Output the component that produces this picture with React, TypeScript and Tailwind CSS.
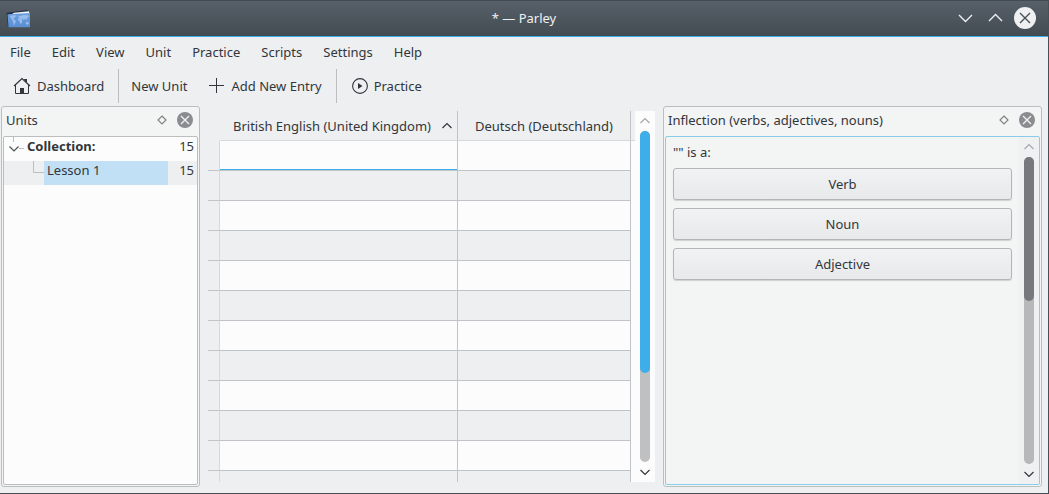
import type { ReactNode } from "react";

const menus = ["File", "Edit", "View", "Unit", "Practice", "Scripts", "Settings", "Help"];
const wordTypes = ["Verb", "Noun", "Adjective"];
const rows = Array.from({ length: 12 }, (_, i) => i);

function Chevron({ up = false, className = "" }: { up?: boolean; className?: string }) {
  return (
    <svg width="12" height="8" viewBox="0 0 12 8" fill="none" stroke="currentColor" strokeWidth="1.2" className={className} aria-hidden="true">
      <path d={up ? "M1.5 6 L6 1.5 L10.5 6" : "M1.5 2 L6 6.5 L10.5 2"} />
    </svg>
  );
}

function AppIcon() {
  return (
    <svg width="26" height="20" viewBox="0 0 26 20" aria-hidden="true">
      <defs>
        <linearGradient id="sea" x1="0" y1="0" x2="0" y2="1">
          <stop offset="0" stopColor="#6c9fdd" />
          <stop offset="1" stopColor="#5a8fd4" />
        </linearGradient>
      </defs>
      <path d="M0.5 4.8 L22 2 L22.5 6 L3 19 L2 19 Z" fill="#1f3148" />
      <path d="M8 4.8 L23 3.3 L23.5 8 L3 8 Z" fill="#f2f4f6" />
      <path d="M1.5 6.3 L24 5 L24 19.3 L2.5 19.3 Z" fill="url(#sea)" />
      <path
        d="M3.5 7.8 L8 7 L10.5 7.7 L8.8 9.5 L7.2 10.7 L8.8 12 L10 13.3 L8.6 16 L7.8 17.8 L7.2 14 L5.6 11.1 Z M12 8.7 L13.5 7.5 L15 7.9 L17 7 L22.5 7.2 L22.8 8.7 L21.3 9.9 L20 12 L18.8 10.7 L17.5 12.2 L16.5 10.5 L15.5 11.5 L16.4 12.7 L15.1 16.2 L14 15.2 L13.5 13 L11.9 12.2 L12.2 10.5 L13.8 9.9 Z M20 14.2 L22 13.7 L23 15.7 L21.5 16.7 L19.8 15.9 Z"
        fill="#97bdec"
      />
    </svg>
  );
}

function HomeIcon() {
  return (
    <svg width="18" height="18" viewBox="0 0 18 18" fill="none" stroke="#31363b" aria-hidden="true">
      <path d="M1 9 L9 1.5 L17 9" strokeWidth="1.2" />
      <path d="M2.5 8 V16.5 H15.5 V8" />
      <path d="M10.5 2 H14 V6 Z" fill="#31363b" stroke="none" />
      <path d="M7 11 H11 V17 H7 Z" fill="#31363b" stroke="none" />
    </svg>
  );
}

function PlusIcon() {
  return (
    <svg width="16" height="16" viewBox="0 0 16 16" stroke="#31363b" aria-hidden="true">
      <path d="M7.5 0 V15 M0 7.5 H15" />
    </svg>
  );
}

function PlayIcon() {
  return (
    <svg width="16" height="16" viewBox="0 0 16 16" aria-hidden="true">
      <circle cx="8" cy="8" r="7.4" fill="none" stroke="#31363b" strokeWidth="1.1" />
      <path d="M6 5 L10.5 8 L6 11 Z" fill="#31363b" />
    </svg>
  );
}

function ToolButton({ icon, children }: { icon?: ReactNode; children: ReactNode }) {
  return (
    <button type="button" className="flex h-8 items-center gap-[6px] whitespace-nowrap">
      {icon}
      {children}
    </button>
  );
}

function Dock({ title, active = false, children }: { title: string; active?: boolean; children: ReactNode }) {
  return (
    <section className="flex min-h-0 flex-col rounded-[3px] border border-[#bbbebf] bg-[#f3f4f4] p-px" aria-label={title}>
      <header className="flex h-7 shrink-0 items-center pr-[5px] pb-[5px] pl-[3px]">
        <h2 className="flex-1 truncate">{title}</h2>
        <button type="button" aria-label={`Float ${title}`} className="flex size-4 items-center justify-center">
          <svg width="10" height="10" viewBox="0 0 10 10" fill="none" stroke="#7f8386" strokeWidth="1.2" aria-hidden="true">
            <path d="M5 1 L9 5 L5 9 L1 5 Z" />
          </svg>
        </button>
        <button type="button" aria-label={`Close ${title}`} className="ml-[7px]">
          <svg width="16" height="16" viewBox="0 0 16 16" aria-hidden="true">
            <circle cx="8" cy="8" r="8" fill="#8a8d90" />
            <path d="M4 4 L12 12 M12 4 L4 12" stroke="#f3f4f4" strokeWidth="1.2" />
          </svg>
        </button>
      </header>
      <div className={`flex min-h-0 flex-1 overflow-hidden rounded-[2px] border ${active ? "border-[#88cdea]" : "border-[#bbbebf] bg-[#fcfcfc]"}`}>
        {children}
      </div>
    </section>
  );
}

function ScrollBar({ label, className, groove, handle }: { label: string; className: string; groove: string; handle: string }) {
  return (
    <div className={`flex w-5 shrink-0 flex-col items-center ${className}`}>
      <button type="button" aria-label={`Scroll ${label} up`} className="flex h-5 w-full items-center justify-center text-[#a5a8ab]">
        <Chevron up />
      </button>
      <div className={`min-h-0 w-[10px] flex-1 rounded-full ${groove}`}>
        <div className={`w-full rounded-full ${handle}`} />
      </div>
      <button type="button" aria-label={`Scroll ${label} down`} className="flex h-5 w-full items-center justify-center text-[#31363b]">
        <Chevron />
      </button>
    </div>
  );
}

export default function App() {
  return (
    <div className="flex h-screen flex-col overflow-hidden border-r border-b border-[#475057] bg-[#eeeff1] font-['Noto_Sans',sans-serif] text-[13px] leading-5 text-[#31363b]">
      <header className="grid h-[37px] shrink-0 grid-cols-[1fr_auto_1fr] items-center border-t border-b border-t-[#434b52] border-b-[#3daee9] bg-linear-to-b from-[#566069] to-[#444c52] pb-[2px] text-[#eff0f1]">
        <div className="pl-[6px]">
          <AppIcon />
        </div>
        <h1>* — Parley</h1>
        <div className="flex items-center justify-end gap-[15px] pr-3">
          <button type="button" aria-label="Minimize">
            <svg width="15" height="22" viewBox="0 0 15 22" fill="none" stroke="currentColor" strokeWidth="1.4" aria-hidden="true">
              <path d="M1 8 L7.5 14.5 L14 8" />
            </svg>
          </button>
          <button type="button" aria-label="Maximize">
            <svg width="15" height="22" viewBox="0 0 15 22" fill="none" stroke="currentColor" strokeWidth="1.4" aria-hidden="true">
              <path d="M1 14 L7.5 7.5 L14 14" />
            </svg>
          </button>
          <button type="button" aria-label="Close window" className="-ml-1">
            <svg width="22" height="22" viewBox="0 0 22 22" aria-hidden="true">
              <circle cx="11" cy="11" r="11" fill="#eff0f1" />
              <path d="M6 6 L16 16 M16 6 L6 16" stroke="#475057" strokeWidth="1.4" />
            </svg>
          </button>
        </div>
      </header>

      <nav className="flex h-8 shrink-0 items-center gap-[21px] pb-[2px] pl-[10px]" aria-label="Main menu">
        {menus.map((menu) => (
          <button key={menu} type="button">
            {menu}
          </button>
        ))}
      </nav>

      <div className="flex h-[37px] shrink-0 items-center pb-[3px] pl-[13px]" role="toolbar" aria-label="Main toolbar">
        <ToolButton icon={<HomeIcon />}>Dashboard</ToolButton>
        <div className="mr-3 ml-[14px] h-full w-px bg-[#bbbebf]" />
        <ToolButton>New Unit</ToolButton>
        <div className="w-[22px]" />
        <ToolButton icon={<PlusIcon />}>Add New Entry</ToolButton>
        <div className="mr-[15px] ml-[14px] h-full w-px bg-[#bbbebf]" />
        <ToolButton icon={<PlayIcon />}>Practice</ToolButton>
      </div>

      <main className="grid min-h-0 flex-1 grid-cols-[199px_minmax(0,1fr)_379px] grid-rows-[minmax(0,1fr)] gap-2 pr-[6px] pb-[6px] pl-px">
        <Dock title="Units">
          <ul role="tree" aria-label="Units" className="w-full leading-[18px]">
            <li role="treeitem" aria-expanded="true" aria-selected="false">
              <div className="flex h-6">
                <svg width="23" height="24" viewBox="0 0 23 24" fill="none" aria-hidden="true">
                  <path d="M9.5 0 V5 M15 11.5 H20" stroke="#bbbebf" />
                  <path d="M5.5 9.5 L10 14 L14.5 9.5" stroke="#4d5257" strokeWidth="1.2" />
                </svg>
                <span className="flex-1 font-bold">Collection:</span>
                <span className="pr-[3px]">15</span>
              </div>
              <ul role="group">
                <li role="treeitem" aria-selected="true" className="flex h-6 bg-[#eeeff1]">
                  <svg width="40" height="24" viewBox="0 0 40 24" fill="none" aria-hidden="true">
                    <path d="M29.5 0 V11.5 H40" stroke="#bbbebf" />
                  </svg>
                  <span className="flex-1 bg-[#c1dff5] pl-[3px]">Lesson 1</span>
                  <span className="pr-[3px] pl-[11px]">15</span>
                </li>
              </ul>
            </li>
          </ul>
        </Dock>

        <div className="my-[5px] flex min-h-0">
          <div className="min-w-0 flex-1 overflow-hidden">
            <table className="w-full table-fixed border-separate border-spacing-0">
              <colgroup>
                <col className="w-3" />
                <col className="w-[238px]" />
                <col />
                <col className="w-1" />
              </colgroup>
              <thead>
                <tr className="h-[30px]">
                  <td className="p-0" />
                  <th scope="col" className="border-r border-b border-r-[#c0c4c9] border-b-[#d6d8d9] p-0 font-normal">
                    <div className="flex items-center justify-between pr-1 pl-[13px]">
                      <span className="truncate">British English (United Kingdom)</span>
                      <Chevron up />
                    </div>
                  </th>
                  <th scope="col" className="truncate border-r border-b border-r-[#c0c4c9] border-b-[#d6d8d9] p-0 font-normal">
                    Deutsch (Deutschland)
                  </th>
                  <td className="border-b border-[#d6d8d9] p-0" />
                </tr>
              </thead>
              <tbody>
                {rows.map((row) => {
                  const fill = row % 2 === 0 ? "bg-[#fcfcfc]" : "bg-[#eeeff1]";
                  return (
                    <tr key={row} className="h-[30px]">
                      <td className="border-r border-b border-r-[#d6d8d9] border-b-[#c3c6c9] p-0" />
                      <td className={`border-r border-b border-[#c0c4c9] p-0 ${fill} ${row === 0 ? "shadow-[inset_0_-1px_0_#3daee9]" : ""}`} />
                      <td className={`border-r border-b border-[#c0c4c9] p-0 ${fill}`} />
                      <td className="bg-[#fcfcfc] p-0" />
                    </tr>
                  );
                })}
              </tbody>
            </table>
          </div>
          <ScrollBar label="vocabulary" className="bg-[#fcfcfc]" groove="bg-[#bfc0c1]" handle="h-[73%] bg-[#3daee9]" />
        </div>

        <Dock title="Inflection (verbs, adjectives, nouns)" active>
          <div className="flex min-w-0 flex-1 flex-col gap-[6px] pt-[5px] pr-[7px] pl-[7px]">
            <p>"" is a:</p>
            <div className="flex flex-col gap-2">
              {wordTypes.map((type) => (
                <button
                  key={type}
                  type="button"
                  className="h-8 rounded-[3px] border border-[#b3b6b7] bg-linear-to-b from-[#f1f2f3] to-[#e8e9ea] shadow-[0_1px_1px_rgba(0,0,0,0.15)]"
                >
                  {type}
                </button>
              ))}
            </div>
          </div>
          <ScrollBar label="inflection" className="bg-[#eff0f2]" groove="bg-[#b7b8b9]" handle="h-[47%] bg-[#75787c]" />
        </Dock>
      </main>
    </div>
  );
}
